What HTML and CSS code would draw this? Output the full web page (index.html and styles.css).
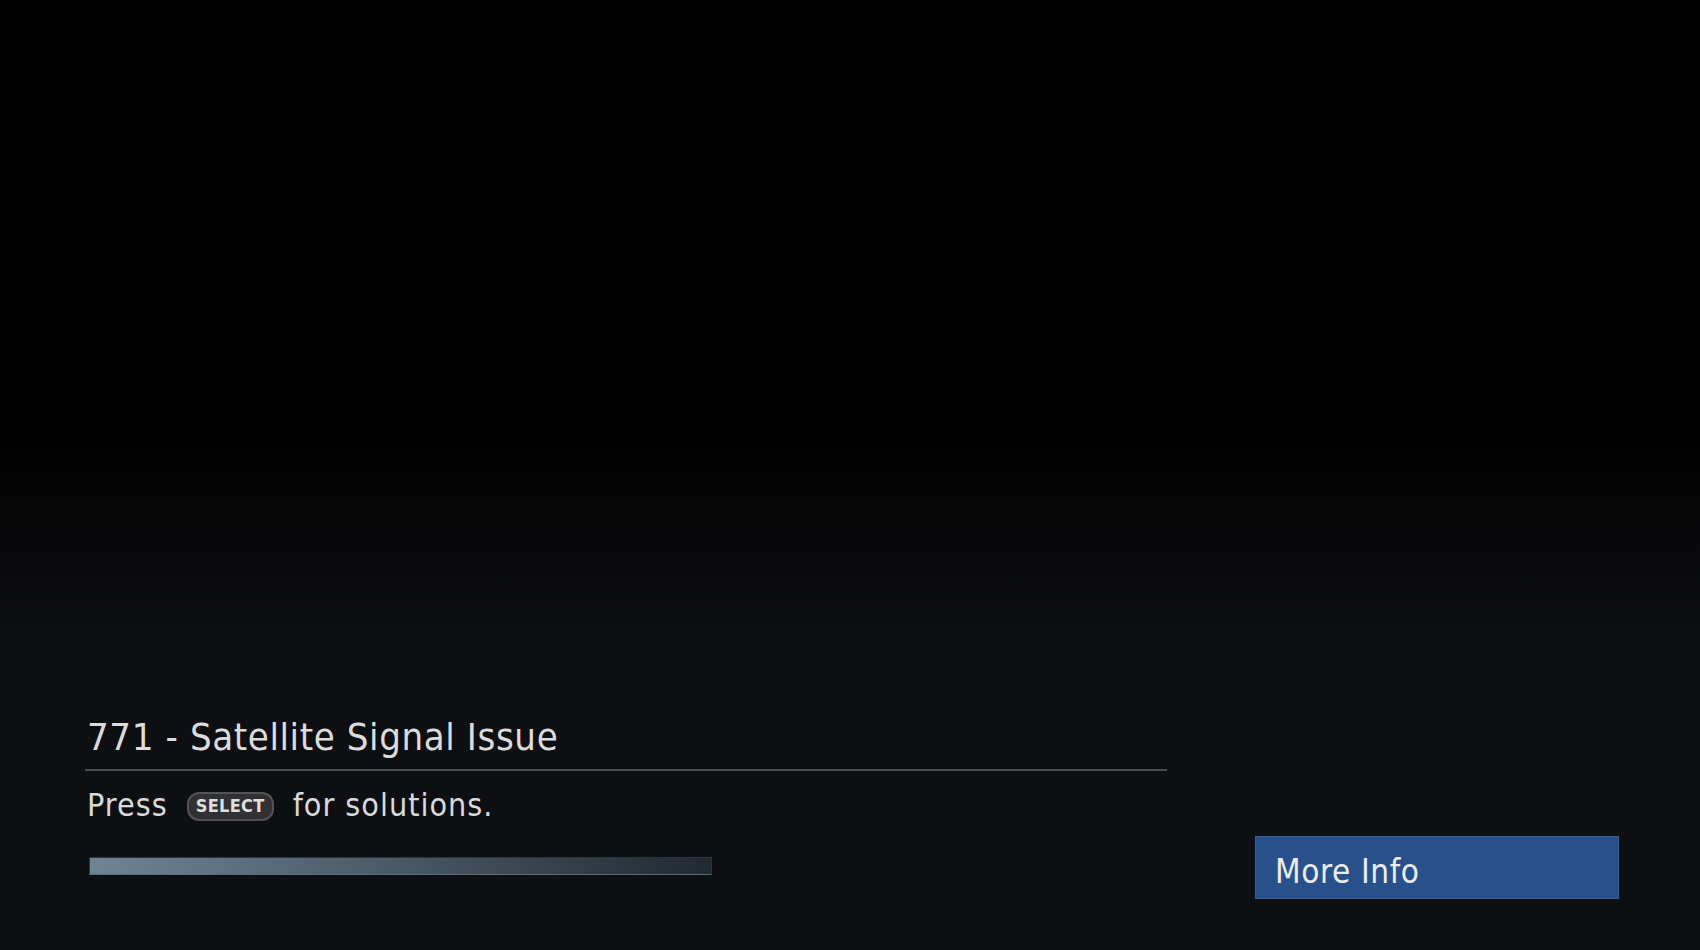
FILE: index.html
```html
<!DOCTYPE html>
<html lang="en">
  <head>
    <meta charset="UTF-8" />
    <title>771 - Satellite Signal Issue</title>
    <link rel="stylesheet" href="styles.css">
  </head>
  <body>
    <!-- Error banner -->
    <section class="alert">
      <div class="alert-main">
        <h1 class="alert-title">771 - Satellite Signal Issue</h1>
        <p class="alert-hint">
          Press <span class="key">SELECT</span> for solutions.
        </p>
        <div class="signal-bar"></div>
      </div>
      <button class="info-btn">More Info</button>
    </section>
  </body>
</html>
```

FILE: styles.css
```css
html,
body {
  height: 100%;
}

body {
  margin: 0;
  font-family: "DejaVu Sans Condensed", "DejaVu Sans", sans-serif;
  font-stretch: semi-condensed;
  background: linear-gradient(to bottom, #000 0%, #000 45%, #0e0f12 68%, #0e0f12 100%);
  color: #dadada;
  display: flex;
  flex-direction: column;
  justify-content: flex-end;
  overflow: hidden;
}

.alert {
  display: flex;
  align-items: flex-end;
  padding: 0 81px 51px 85px;
}

.alert-main {
  width: 1082px;
  padding-bottom: 24px;
  margin-right: 88px;
}

.alert-title {
  margin: 0;
  font-size: 38px;
  line-height: 46px;
  font-weight: normal;
  letter-spacing: 0.6px;
  text-indent: 2px;
  color: #dcdcdc;
  padding-bottom: 9px;
  border-bottom: 2px solid #4a4b4d;
}

.alert-hint {
  margin: 14px 0 0 2px;
  font-size: 32px;
  line-height: 40px;
  letter-spacing: 1px;
  color: #dadada;
  display: flex;
  align-items: center;
}

.key {
  display: inline-flex;
  align-items: center;
  justify-content: center;
  box-sizing: border-box;
  width: 87px;
  height: 29px;
  margin: 2px 19px 0 19px;
  border: 2px solid #535355;
  border-radius: 12px;
  background: #313134;
  color: #dedede;
  font-size: 18px;
  font-weight: bold;
  letter-spacing: 0.3px;
}

.signal-bar {
  margin: 32px 0 0 4px;
  width: 623px;
  height: 18px;
  box-sizing: border-box;
  border: 1px solid #2c343c;
  border-bottom-color: #5b6c78;
  background: linear-gradient(to right, #6e8494 0%, #4c5d6b 45%, #212931 100%);
}

.info-btn {
  width: 364px;
  height: 63px;
  box-sizing: border-box;
  padding: 7px 0 0 19px;
  text-align: left;
  font-family: inherit;
  font-stretch: inherit;
  font-size: 33px;
  letter-spacing: 0.6px;
  color: #ececec;
  background: #28518b;
  border: 1px solid #3c5f92;
  cursor: pointer;
}
```
